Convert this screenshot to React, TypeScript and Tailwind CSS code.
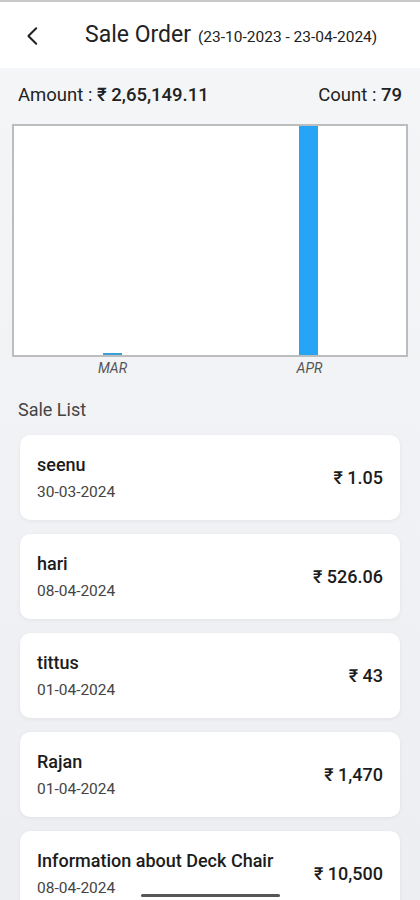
import React from "react";

interface Sale {
	name: string;
	date: string;
	amount: string;
}

const sales: Sale[] = [
	{ name: "seenu", date: "30-03-2024", amount: "1.05" },
	{ name: "hari", date: "08-04-2024", amount: "526.06" },
	{ name: "tittus", date: "01-04-2024", amount: "43" },
	{ name: "Rajan", date: "01-04-2024", amount: "1,470" },
	{ name: "Information about Deck Chair", date: "08-04-2024", amount: "10,500" },
];

function BackIcon() {
	return (
		<svg width="22" height="22" viewBox="0 0 24 24" fill="none" stroke="#222" strokeWidth="2.2" strokeLinecap="round" strokeLinejoin="round">
			<path d="M15.5 3.5 7 12l8.5 8.5" />
		</svg>
	);
}

export default function App() {
	return (
		<div
			className="relative w-[420px] h-[900px] overflow-hidden bg-gradient-to-b from-[#f5f6f8] to-[#eceef1]"
			style={{ fontFamily: "Roboto, 'Noto Sans', sans-serif" }}
		>
			<div className="h-[2px] bg-[#c9c9c9]" />
			<div className="flex items-center h-[66px] bg-white">
				<div className="pl-[22px] pr-[41px] pt-[2px]">
					<BackIcon />
				</div>
				<div className="flex items-baseline gap-[7px] text-[#222]">
					<span className="text-[23px]">Sale Order</span>
					<span className="text-[15.5px]">(23-10-2023 - 23-04-2024)</span>
				</div>
			</div>

			<div className="flex justify-between items-center px-[18px] pt-[13px] h-[42px] text-[18.5px] text-[#222]">
				<span>
					Amount : <span className="font-medium">₹ 2,65,149.11</span>
				</span>
				<span>
					Count : <span className="font-medium">79</span>
				</span>
			</div>

			<div className="mx-[12px] mt-[14px]">
				<div className="relative flex items-end h-[233px] bg-white border-2 border-[#bdbdbd]">
					<div className="flex-1 flex justify-center">
						<div className="w-[19px] h-[2px] bg-[#3b9fd6]" />
					</div>
					<div className="flex-1 flex justify-center">
						<div className="w-[19px] h-[229px] bg-[#26a5f6]" />
					</div>
				</div>
				<div className="flex text-[14px] italic text-[#555] leading-[18px] mt-[2px]">
					<div className="flex-1 text-center pl-[2px]">MAR</div>
					<div className="flex-1 text-center">APR</div>
				</div>
			</div>

			<div className="px-[18px] pt-[21px] text-[18px] leading-[24px] text-[#444]">Sale List</div>

			<div className="flex flex-col gap-[14px] px-[20px] pt-[13px]">
				{sales.map((s) => (
					<div
						key={s.name}
						className="flex items-center justify-between h-[85px] px-[17px] bg-white rounded-[10px] shadow-[0_1px_4px_rgba(0,0,0,0.06)]"
					>
						<div className="flex flex-col gap-[6px]">
							<span className="text-[18px] font-medium text-[#1c1c1c] leading-[23px]">{s.name}</span>
							<span className="text-[15.5px] text-[#444] leading-[20px]">{s.date}</span>
						</div>
						<span className="text-[18px] font-medium text-[#1c1c1c]">₹ {s.amount}</span>
					</div>
				))}
			</div>

			<div className="absolute left-[141px] bottom-[3px] w-[139px] h-[3px] rounded-full bg-[#555]" />
		</div>
	);
}
